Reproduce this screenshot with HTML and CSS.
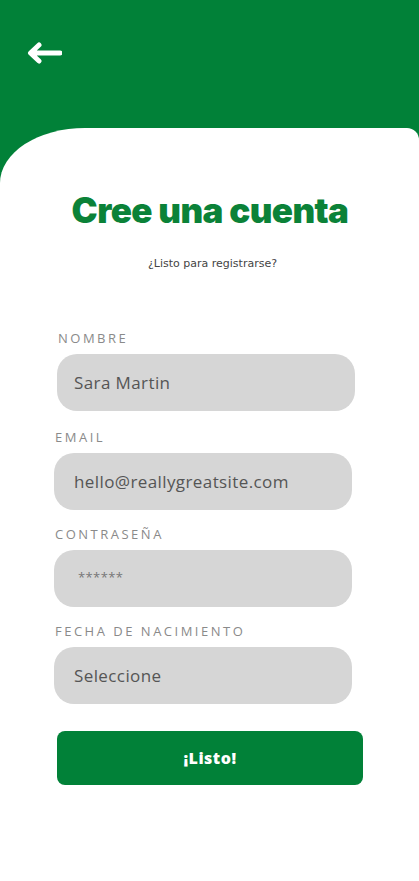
FILE: index.html
```html
<!DOCTYPE html>
<html lang="es">
<head>
<meta charset="utf-8">
<title>Cree una cuenta</title>
<link rel="stylesheet" href="styles.css">
</head>
<body>
<div class="screen">
  <header class="top">
    <button class="back" aria-label="Volver">
      <svg width="36" height="22" viewBox="0 0 36 22">
        <path d="M34 11H5M13 3L4.5 11L13 19" fill="none" stroke="#fff" stroke-width="5" stroke-linecap="round" stroke-linejoin="round"/>
      </svg>
    </button>
  </header>
  <main class="sheet">
    <h1 class="title">Cree una cuenta</h1>
    <p class="subtitle">¿Listo para registrarse?</p>
    <form class="form">
      <div class="field f1">
        <label class="label">NOMBRE</label>
        <div class="input">Sara Martin</div>
      </div>
      <div class="field f2">
        <label class="label">EMAIL</label>
        <div class="input">hello@reallygreatsite.com</div>
      </div>
      <div class="field f2">
        <label class="label">CONTRASEÑA</label>
        <div class="input pass">******</div>
      </div>
      <div class="field f2">
        <label class="label">FECHA DE NACIMIENTO</label>
        <div class="input">Seleccione</div>
      </div>
      <button type="button" class="submit">¡Listo!</button>
    </form>
  </main>
</div>
</body>
</html>
```

FILE: styles.css
```css
* { box-sizing: border-box; }
html, body {
  margin: 0;
  padding: 0;
  background: #ffffff;
}
.screen {
  width: 419px;
  height: 881px;
  background: #018138;
  display: flex;
  flex-direction: column;
  overflow: hidden;
}
.top {
  height: 128px;
  padding: 42px 0 0 26px;
}
.back {
  background: none;
  border: 0;
  padding: 0;
  width: 36px;
  height: 22px;
  display: block;
}
.back svg { display: block; }
.sheet {
  flex: 1;
  background: #ffffff;
  border-radius: 85px 12px 0 0 / 55px 12px 0 0;
  padding-top: 62px;
  display: flex;
  flex-direction: column;
  align-items: center;
}
.title {
  margin: 0;
  font-family: Inter, "Liberation Sans", sans-serif;
  font-weight: 900;
  font-size: 35px;
  line-height: 40px;
  letter-spacing: -0.6px;
  color: #0b8238;
  margin-left: 1px;
}
.subtitle {
  margin: 27px 0 0;
  font-family: "DejaVu Sans", sans-serif;
  font-size: 11px;
  line-height: 14px;
  color: #444;
  margin-left: 6px;
}
.form {
  width: 100%;
  padding: 58px 0 0;
  display: flex;
  flex-direction: column;
}
.field {
  display: flex;
  flex-direction: column;
}
.f1 { padding-left: 57px; padding-right: 64px; margin-bottom: 2px; }
.f1 .input { padding-left: 17px; }
.f2 { padding-left: 54px; padding-right: 67px; margin-top: 15px; }
.label {
  font-family: "Open Sans", sans-serif;
  font-size: 13px;
  line-height: 18px;
  letter-spacing: 2.5px;
  color: #8a8a8a;
  margin-left: 1px;
  margin-bottom: 7px;
}
.input {
  height: 57px;
  border-radius: 20px;
  background: #d6d6d6;
  padding-left: 20px;
  display: flex;
  align-items: center;
  font-family: "Open Sans", sans-serif;
  font-size: 17px;
  letter-spacing: 0.4px;
  color: #555;
}
.input.pass {
  font-size: 13px;
  color: #777;
  padding-left: 24px;
  padding-bottom: 4px;
}
.submit {
  margin: 27px 56px 0 57px;
  height: 54px;
  border: 0;
  border-radius: 8px;
  background: #018138;
  color: #fff;
  font-family: "Open Sans", sans-serif;
  font-weight: 800;
  font-size: 16px;
  letter-spacing: 0.5px;
}
```
